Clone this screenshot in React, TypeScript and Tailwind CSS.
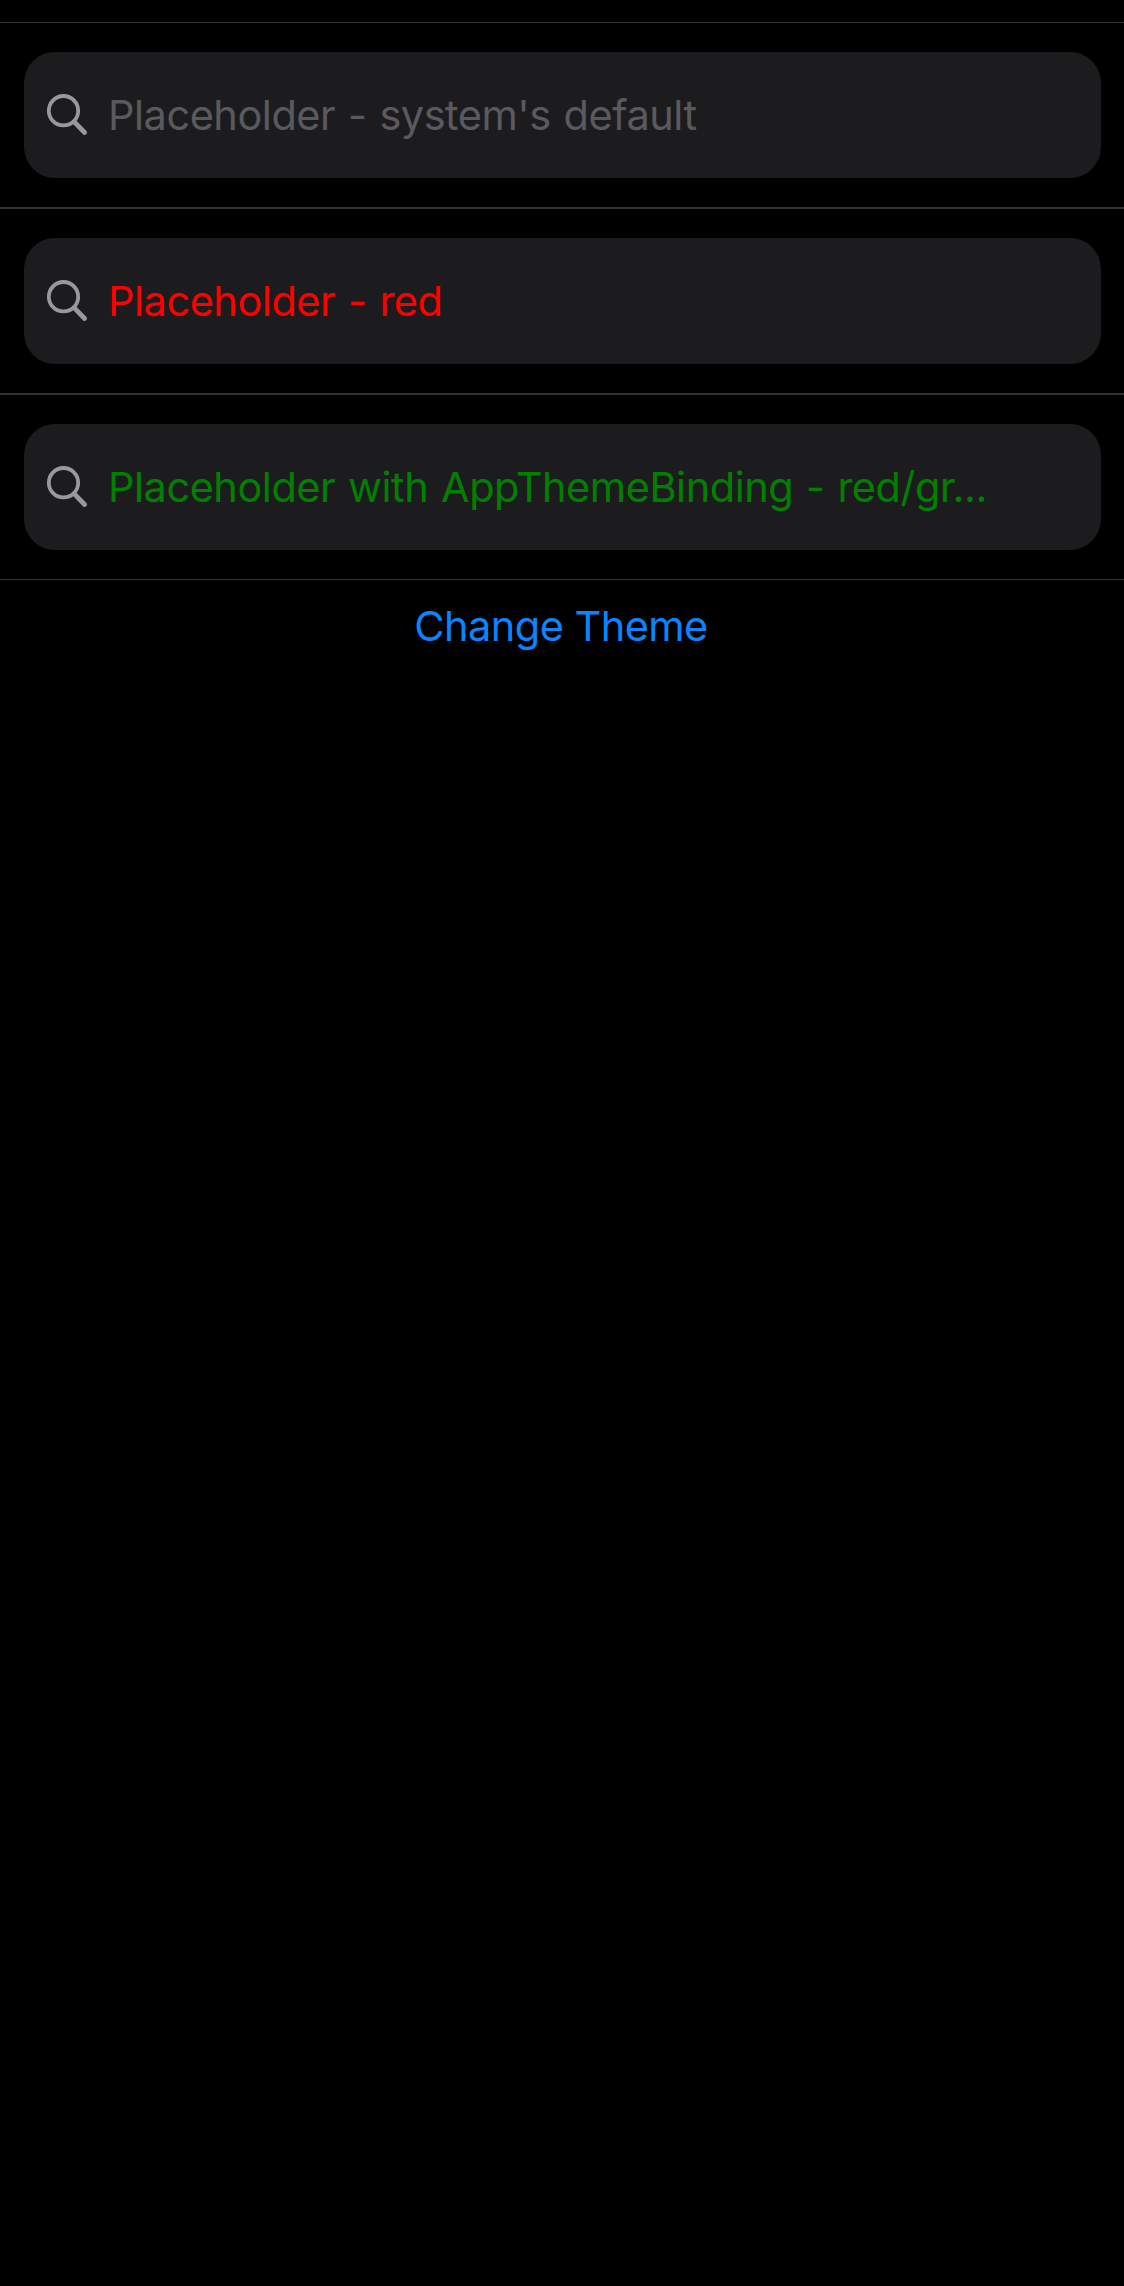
function SearchBar({ text, color }: { text: string; color: string }) {
  return (
    <div className="h-[186px] border-y border-[#323234] px-6 pt-[29px]">
      <div className="flex h-[126px] w-[1077px] items-center rounded-[31px] bg-[#1c1c1e]">
        <svg className="ml-[22px] h-[42px] w-[42px] shrink-0" viewBox="0 0 42 42" fill="none" stroke="#98989f" strokeLinecap="round">
          <circle cx="17.5" cy="16.7" r="14.7" strokeWidth="3.8" />
          <path d="M28.3 27.8L38.6 38.5" strokeWidth="4.8" />
        </svg>
        <span className={"ml-[20px] mt-[2px] whitespace-nowrap text-[41.5px] leading-none tracking-[-0.48px] [word-spacing:1.6px] " + color}>{text}</span>
      </div>
    </div>
  );
}

export default function App() {
  return (
    <main className="h-[2286px] w-[1124px] overflow-hidden bg-black pt-[22px] font-['Inter',sans-serif]">
      <SearchBar text="Placeholder - system's default" color="text-[#5a5a5e]" />
      <SearchBar text="Placeholder - red" color="text-[#ff0000]" />
      <SearchBar text="Placeholder with AppThemeBinding - red/gr..." color="text-[#008000]" />
      <div className="flex justify-center pr-[2px] pt-[26px]">
        <button className="text-[41.5px] leading-none tracking-[-0.55px] text-[#0a84ff]">Change Theme</button>
      </div>
    </main>
  );
}
